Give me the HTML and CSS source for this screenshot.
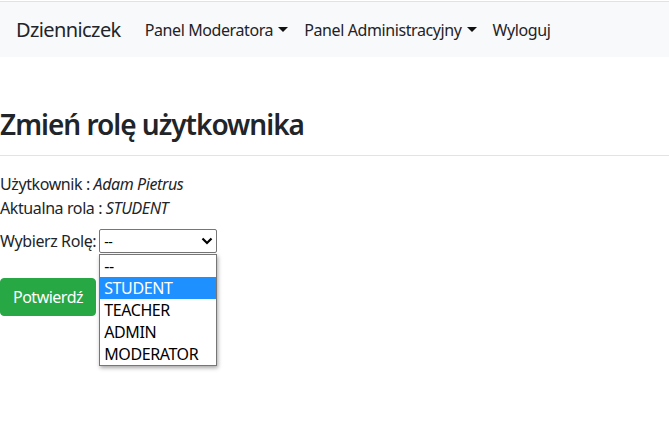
FILE: index.html
```html
<!DOCTYPE html>
<html lang="pl">
<head>
<meta charset="utf-8">
<title>Dzienniczek</title>
<link rel="stylesheet" href="styles.css">
</head>
<body>
<nav class="navbar">
  <a class="brand" href="#">Dzienniczek</a>
  <ul class="nav">
    <li><a class="nav-link dropdown-toggle" href="#">Panel Moderatora</a></li>
    <li><a class="nav-link dropdown-toggle" href="#">Panel Administracyjny</a></li>
    <li><a class="nav-link" href="#">Wyloguj</a></li>
  </ul>
</nav>
<main class="content">
  <h2 class="title">Zmień rolę użytkownika</h2>
  <hr class="divider">
  <p class="info">Użytkownik : <em>Adam Pietrus</em></p>
  <p class="info">Aktualna rola : <em>STUDENT</em></p>
  <form class="role-form">
    <div class="field">
      <label class="field-label">Wybierz Rolę:</label>
      <div class="select-wrap">
        <div class="select">
          <span class="select-value">--</span>
          <svg class="chevron" width="12" height="8" viewBox="0 0 12 8"><path d="M1.5 1.5 L6 6 L10.5 1.5" fill="none" stroke="#000" stroke-width="2.2"/></svg>
        </div>
        <ul class="options">
          <li class="option">--</li>
          <li class="option selected">STUDENT</li>
          <li class="option">TEACHER</li>
          <li class="option">ADMIN</li>
          <li class="option">MODERATOR</li>
        </ul>
      </div>
    </div>
    <button type="button" class="btn-success">Potwierdź</button>
  </form>
</main>
</body>
</html>
```

FILE: styles.css
```css
* { box-sizing: border-box; }
html, body { margin: 0; padding: 0; }
body {
  font-family: "Noto Sans", "Open Sans", sans-serif;
  font-size: 16px;
  line-height: 1.5;
  letter-spacing: -0.4px;
  color: #212529;
  background: #fff;
  padding-top: 1px;
  min-height: 100vh;
}
a { text-decoration: none; }

.navbar {
  display: flex;
  align-items: center;
  height: 56px;
  padding: 8px 16px;
  background: #f8f9fa;
  border-top: 1px solid #e2e2e2;
}
.brand {
  font-size: 20px;
  line-height: 30px;
  letter-spacing: -0.6px;
  color: #212529;
  margin-right: 16px;
}
.nav {
  display: flex;
  list-style: none;
  margin: 0;
  padding: 0;
}
.nav-link {
  display: block;
  padding: 8px;
  color: #1f2326;
}
.dropdown-toggle::after {
  content: "";
  display: inline-block;
  margin-left: 5px;
  vertical-align: 4px;
  border-top: 5px solid #111;
  border-left: 5px solid transparent;
  border-right: 5px solid transparent;
}

.content { padding: 0; }
.title {
  margin: 48px 0 0;
  font-size: 28px;
  font-weight: 600;
  line-height: 38px;
  letter-spacing: -1px;
  color: #212529;
}
.divider {
  margin: 12px 0 16px;
  border: 0;
  border-top: 1px solid #e3e3e3;
}
.info { margin: 0; }
.info em { font-style: italic; }

.role-form { margin-top: 9px; }
.field {
  display: flex;
  align-items: center;
  gap: 3px;
}
.field-label { white-space: nowrap; }
.select-wrap { position: relative; }
.select {
  width: 118px;
  height: 24px;
  border: 1px solid #767676;
  border-radius: 2px;
  display: flex;
  align-items: center;
  justify-content: space-between;
  padding: 0 3px 0 4px;
  background: #fff;
  font-size: 14px;
  color: #000;
}
.chevron { display: block; }
.options {
  position: absolute;
  left: 0;
  top: 25px;
  width: 118px;
  margin: 0;
  padding: 0;
  list-style: none;
  background: #fff;
  border: 1px solid #767676;
  box-shadow: 1px 2px 4px rgba(0,0,0,0.35);
  z-index: 10;
}
.option {
  height: 22px;
  line-height: 22px;
  padding: 0 4px;
  font-size: 16px;
  color: #000;
}
.option.selected {
  background: #1e90ff;
  color: #fff;
}

.btn-success {
  margin-top: 25px;
  display: inline-block;
  font-family: inherit;
  font-size: 16px;
  letter-spacing: -0.5px;
  line-height: 24px;
  padding: 6px 12px;
  color: #fff;
  background: #28a745;
  border: 1px solid #28a745;
  border-radius: 4px;
}
```
